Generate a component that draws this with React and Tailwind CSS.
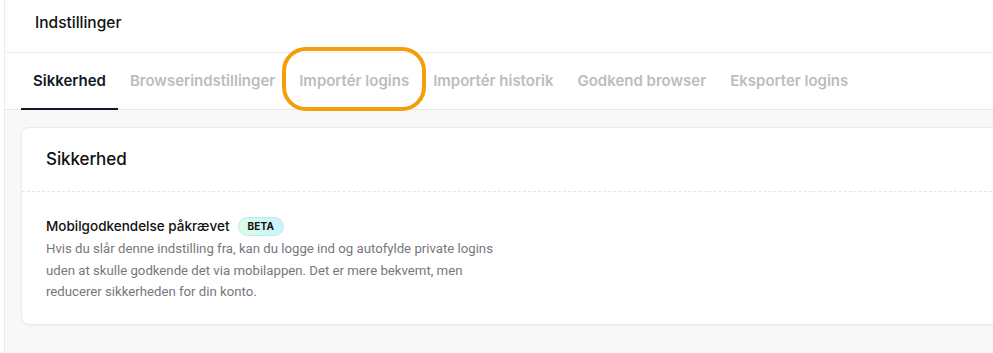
export default function App() {
  const tabs = [
    'Sikkerhed',
    'Browserindstillinger',
    'Importér logins',
    'Importér historik',
    'Godkend browser',
    'Eksporter logins',
  ];

  return (
    <div
      className="flex h-[353px] w-[993px] overflow-hidden bg-white"
      style={{ fontFamily: 'Inter, "Noto Sans", sans-serif' }}
    >
      <div className="w-[4px] shrink-0 bg-white" />
      <div className="flex min-w-0 flex-1 flex-col border-l border-[#ececec]">
        {/* page header */}
        <div className="flex h-[53px] shrink-0 items-center border-b border-[#ececec] pb-[7px] pl-[30px]">
          <h1 className="text-[15.5px] font-medium text-[#111]">Indstillinger</h1>
        </div>

        {/* tabs */}
        <div className="flex h-[57px] shrink-0 border-b border-[#e8e8e8] pl-[16px]">
          {tabs.map((tab, i) => (
            <div key={tab} className="relative flex items-center px-3">
              <span
                className={
                  i === 0
                    ? 'text-[15px] font-semibold text-[#111827]'
                    : 'text-[15px] font-semibold text-[#bcbcc2]'
                }
              >
                {tab}
              </span>
              {i === 0 && (
                <div className="absolute bottom-[-1px] left-0 right-0 h-[2px] bg-[#111827]" />
              )}
              {i === 2 && (
                <div className="pointer-events-none absolute bottom-[-2px] left-[-5px] right-[-5px] top-[-6px] rounded-[24px] border-[4px] border-[#f59e0b]" />
              )}
            </div>
          ))}
        </div>

        {/* content */}
        <div className="flex-1 bg-[#f8f8f8] pl-[16px] pt-[17px]">
          <div className="mr-[-20px] rounded-[8px] border border-[#ebebeb] bg-white shadow-[0_1px_2px_rgba(0,0,0,0.04)]">
            <div className="flex h-[64px] items-center border-b border-dashed border-[#e6e6e6] px-[24px]">
              <h2 className="text-[17px] font-medium tracking-[-0.1px] text-[#111]">Sikkerhed</h2>
            </div>
            <div className="px-[24px] pb-[21px] pt-[24px]">
              <div className="flex items-center gap-[8px]">
                <span className="text-[13.5px] font-medium text-[#111]">
                  Mobilgodkendelse påkrævet
                </span>
                <span className="rounded-full border border-[#b6ecf5] bg-gradient-to-r from-[#dcfce7] to-[#cdf1fa] px-[9px] py-[1px] text-[10px] font-bold tracking-[0.2px] text-[#111]">
                  BETA
                </span>
              </div>
              <p
                className="mt-[2px] w-[474px] text-[13.2px] leading-[21.5px] text-[#77777d]"
                style={{ fontFamily: 'Roboto, Inter, sans-serif' }}
              >
                Hvis du slår denne indstilling fra, kan du logge ind og autofylde private logins
                uden at skulle godkende det via mobilappen. Det er mere bekvemt, men reducerer
                sikkerheden for din konto.
              </p>
            </div>
          </div>
        </div>
      </div>
    </div>
  );
}
